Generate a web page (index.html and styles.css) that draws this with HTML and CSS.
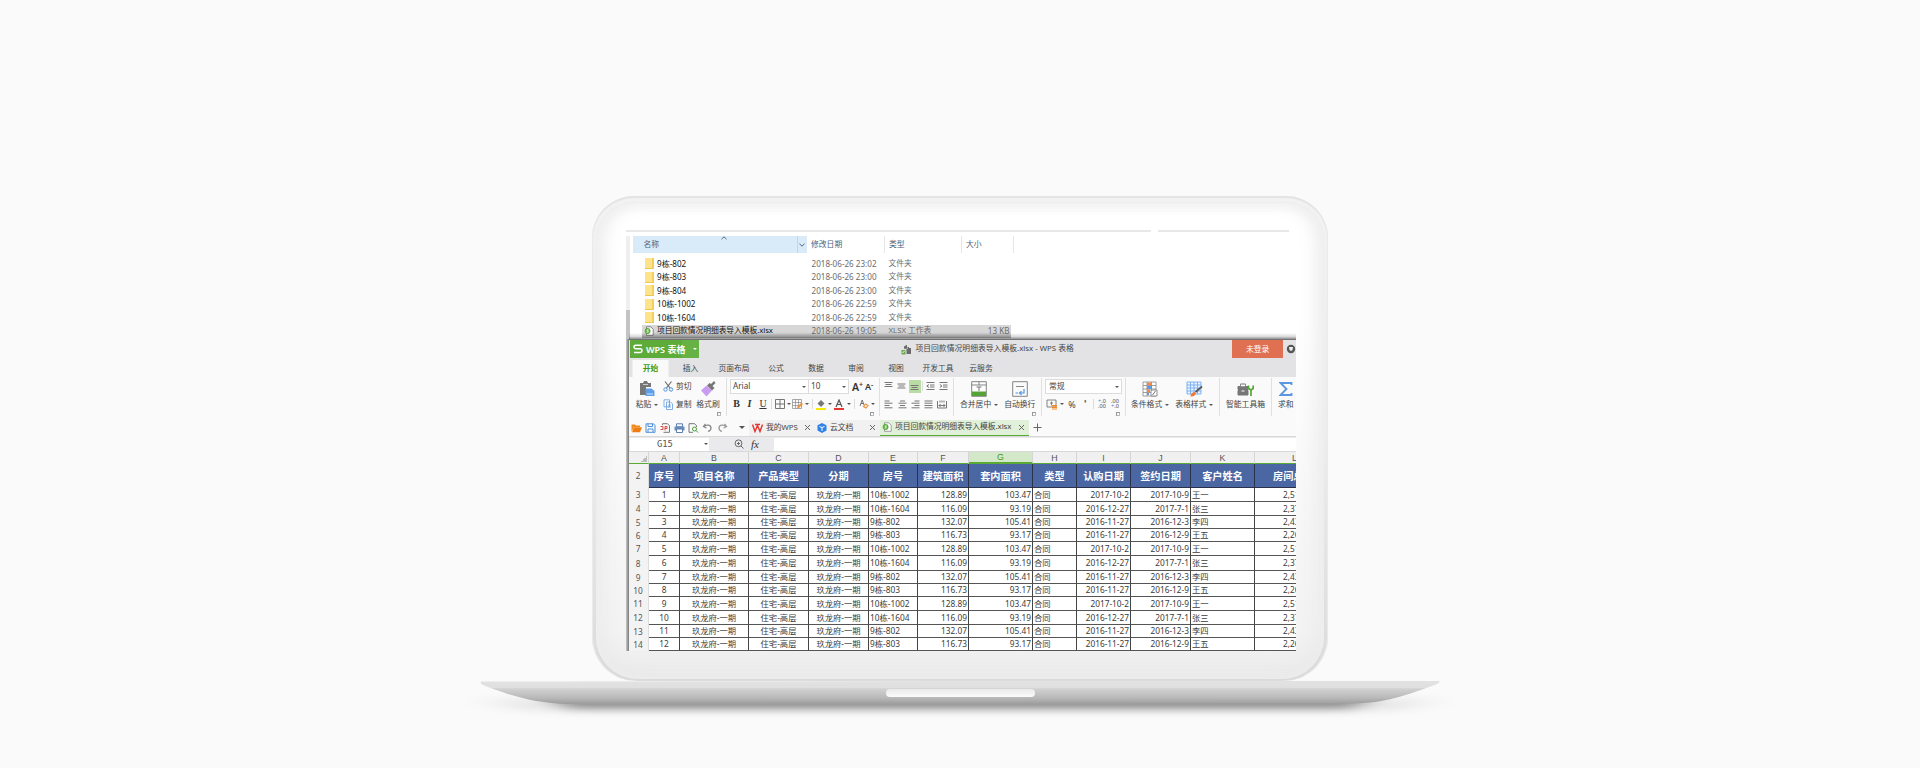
FILE: index.html
```html
<!DOCTYPE html>
<html lang="zh-CN">
<head>
<meta charset="utf-8">
<title>项目回款情况明细表导入模板.xlsx - WPS 表格</title>
<link rel="stylesheet" href="styles.css">
</head>
<body>
<main class="laptop">
<div class="lid"><div class="bezel"><div class="screen">

<section class="explorer">
  <div class="topline"><i></i><i></i></div>
  <div class="fhead"><b class="name">名称<svg class="up" width="6" height="4" viewBox="0 0 6 4"><path d="M.5 3.2 3 .8l2.5 2.4"/></svg></b><b class="drop"><svg width="6" height="4" viewBox="0 0 6 4"><path d="M.5.8 3 3.2 5.5.8"/></svg></b><b class="date">修改日期</b><b class="type">类型</b><b class="size">大小</b></div>
  <div class="files">
    <div class="file"><span class="folder"></span><b>9栋-802</b><span>2018-06-26 23:02</span><span>文件夹</span><span></span></div>
    <div class="file"><span class="folder"></span><b>9栋-803</b><span>2018-06-26 23:00</span><span>文件夹</span><span></span></div>
    <div class="file"><span class="folder"></span><b>9栋-804</b><span>2018-06-26 23:00</span><span>文件夹</span><span></span></div>
    <div class="file"><span class="folder"></span><b>10栋-1002</b><span>2018-06-26 22:59</span><span>文件夹</span><span></span></div>
    <div class="file"><span class="folder"></span><b>10栋-1604</b><span>2018-06-26 22:59</span><span>文件夹</span><span></span></div>
    <div class="file sel"><svg width="10" height="10" viewBox="0 0 10 10"><path d="M2.5.8h4.2l2.5 2.5v6H2.5z" fill="#fff" stroke="#666" stroke-width=".8"/><circle cx="3.6" cy="5" r="2.9" fill="#5cae3c"/><path d="M4.8 3.8H3.2v1.1h1v1.2H2.4" fill="none" stroke="#fff" stroke-width=".7"/></svg><b class="long">项目回款情况明细表导入模板.xlsx</b><span>2018-06-26 19:05</span><span>XLSX 工作表</span><span class="kb">13 KB</span></div>
  </div>
</section>

<section class="work">
<div class="rail"></div>
<div class="wps">
  <header class="title">
    <div class="brand"><svg width="10" height="10" viewBox="0 0 10 10"><path d="M9 1.3H2.8Q1 1.3 1 3t1.8 1.8h4.4Q9 4.800 9 6.600T7.200 8.500H1" fill="none" stroke="#fff" stroke-width="1.5"/></svg><b>WPS 表格</b><i class="caret"></i></div>
    <div class="caption"><svg width="11" height="11" viewBox="0 0 11 11"><path d="M3 2.500 6 .8v4H3zM6.500 3h1.500v1h2v6H5.500V5h1z" fill="#6a6a6a"/><path d="M.5 6h4v4.500h-4z" fill="#6aa84f"/><path d="M1.500 9l2-2" stroke="#fff"/></svg><span>项目回款情况明细表导入模板.xlsx - WPS 表格</span></div>
    <div class="login">未登录</div>
    <svg class="skin" width="10" height="10" viewBox="0 0 10 10"><circle cx="5" cy="5" r="4.200" fill="#555"/><path d="M3 3h4l-.5 3L5 7 3.500 6z" fill="#eee"/></svg>
  </header>
  <nav class="tabs"><b>开始</b><span>插入</span><span class="w4">页面布局</span><span>公式</span><span>数据</span><span>审阅</span><span>视图</span><span class="w4">开发工具</span><span class="w3">云服务</span></nav>

  <div class="ribbon">
    <div class="grp clip">
      <div class="big paste"><svg width="17" height="16" viewBox="0 0 17 16"><path d="M1 2h3l1-2h3l1 2h3v4H7v8H1z" fill="#777"/><path d="M4 3.500h5" stroke="#ccc"/><path d="M6.500 7.500h6l3 2.500v5h-9z" fill="#5f9fe8"/><path d="M8 13h6" stroke="#cfe2f8"/></svg><span>粘贴<i class="caret"></i></span></div>
      <div class="duo">
        <span><svg width="11" height="11" viewBox="0 0 11 11" fill="none"><path d="M2 .5 7 7M8.500.5 3.500 7" stroke="#666" stroke-width="1.100"/><circle cx="2.500" cy="8.500" r="1.700" stroke="#4f93dd"/><circle cx="8" cy="8.500" r="1.700" stroke="#4f93dd"/></svg>剪切</span>
        <span><svg width="11" height="11" viewBox="0 0 11 11" fill="#fff" stroke="#5e9ce2" stroke-width=".8"><path d="M1 .8h5.500v7H1zM3.500 3h4l2 2v5.500h-6zM5 6h3M5 8h3"/></svg>复制</span>
      </div>
      <div class="big brush"><svg width="16" height="16" viewBox="0 0 16 16"><path d="M7 4.500 9.500 2l1.500 1L14 0l1.500 2-3 3 2 2-2.500 2.500z" fill="#777"/><path d="M1 9.500l5.500-5 5.500 5-5.500 6z" fill="#c89cf0"/></svg><span>格式刷</span></div>
      <i class="corner"></i>
    </div>
    <div class="grp font">
      <div class="r1"><span class="box b1">Arial<i class="caret"></i></span><span class="box b2">10<i class="caret"></i></span><span class="aa">A<sup>+</sup></span><span class="aa sm">A<sup>-</sup></span></div>
      <div class="r2">
        <b>B</b><em>I</em><u>U</u><i class="bar"></i>
        <svg width="10" height="10" viewBox="0 0 10 10"><path d="M.5.5h9v9h-9zM5 .5v9M.5 5h9" fill="none" stroke="#666" stroke-width=".9"/></svg><i class="caret"></i>
        <svg width="11" height="10" viewBox="0 0 11 10"><path d="M.5.5h9v9h-9zM.5 3.500h9M3.500.5v9M6.500.5v9M.5 6.500h9" fill="none" stroke="#888" stroke-width=".7"/><path d="m5 9.500.5-2 4-4 1.500 1.500-4 4z" fill="#f0923b"/></svg><i class="caret"></i><i class="bar"></i>
        <svg width="10" height="11" viewBox="0 0 10 11"><path d="M1.500 4.500 5 1l3.500 3.500L5 8z" fill="#777"/><path d="M0 9h10v2H0z" fill="#f7ea00"/></svg><i class="caret"></i>
        <svg width="10" height="11" viewBox="0 0 10 11"><path d="m2 8 3-7 3 7M3 5.500h4" fill="none" stroke="#555" stroke-width="1.200"/><path d="M0 9h10v2H0z" fill="#e23a2e"/></svg><i class="caret"></i><i class="bar"></i>
        <svg width="10" height="10" viewBox="0 0 10 10" fill="none"><path d="m1 7 2.200-6 1.800 5M2 4.500h2.500" stroke="#666" stroke-width=".9"/><path d="m4.500 7.500 2-2.500 2.500 1.500-2 2.500z" stroke="#f0923b" stroke-width="1.200"/></svg><i class="caret"></i>
      </div>
      <i class="corner"></i>
    </div>
    <div class="grp align">
      <div class="a1">
        <svg width="9" height="10" viewBox="0 0 9 10"><path d="M.5 1.500h8M1.500 3.500h6M.5 5.500h8"/></svg>
        <svg width="9" height="10" viewBox="0 0 9 10"><path d="M.5 3h8M1.500 5h6M.5 7h8"/></svg>
        <span class="on"><svg width="9" height="10" viewBox="0 0 9 10"><path d="M.5 4.500h8M1.500 6.500h6M.5 8.500h8"/></svg></span>
        <i class="bar"></i>
        <svg width="9" height="10" viewBox="0 0 9 10"><path d="M.5 1.500h8M4 4h4.500M4 6h4.500M.5 8.500h8M3 3.500.8 5 3 6.500"/></svg>
        <svg width="9" height="10" viewBox="0 0 9 10"><path d="M.5 1.500h8M4 4h4.500M4 6h4.500M.5 8.500h8M.8 3.500 3 5 .8 6.500"/></svg>
      </div>
      <div class="a2">
        <svg width="9" height="9" viewBox="0 0 9 9"><path d="M.5 1h5M.5 3.200h8M.5 5.500h5M.5 7.800h8"/></svg>
        <svg width="9" height="9" viewBox="0 0 9 9"><path d="M2 1h5M.5 3.200h8M2 5.500h5M.5 7.800h8"/></svg>
        <svg width="9" height="9" viewBox="0 0 9 9"><path d="M3.500 1h5M.5 3.200h8M3.500 5.500h5M.5 7.800h8"/></svg>
        <svg width="9" height="9" viewBox="0 0 9 9"><path d="M.5 1h8M.5 3.200h8M.5 5.500h8M.5 7.800h8"/></svg>
        <svg width="10" height="9" viewBox="0 0 10 9"><path d="M.5 1v7h9V1M2 5.500h6M3.500 4 2 5.500 3.500 7M6.500 4 8 5.500 6.500 7M3 .5v2M5 .5v2M7 .5v2"/></svg>
      </div>
    </div>
    <div class="grp merge">
      <div class="big mg"><svg width="16" height="16" viewBox="0 0 16 16"><path d="M.7.7h14.600v14.600H.7zM.7 4h14.600M8 .7V4" fill="#fff" stroke="#777" stroke-width=".9"/><path d="M1 10.500h14V15H1z" fill="#55a236"/><path d="M5.500 6h5M8 6v4" stroke="#777"/></svg><span>合并居中<i class="caret"></i></span></div>
      <div class="big"><svg width="16" height="16" viewBox="0 0 16 16" fill="none"><path d="M.7.7h14.600v14.600H.7z" stroke="#777" stroke-width=".9"/><path d="M4 5.500h8" stroke="#888"/><path d="M12 8v4H8.500M3.500 12H6M9.500 10.300 7.500 12l2 1.700" stroke="#4f93dd" stroke-width="1.200"/></svg><span>自动换行</span></div>
      <i class="corner"></i>
    </div>
    <div class="grp num">
      <div class="r1"><span class="box b3">常规<i class="caret"></i></span></div>
      <div class="n2"><svg width="12" height="11" viewBox="0 0 12 11"><path d="M1 1h9v7H1zM5.500 2.500v4M4 4h3" fill="none" stroke="#777" stroke-width=".9"/><path d="M6 6h5v1.500H6zM6 8h5v1H6zM6 9.500h5v1H6z" fill="#f58a2c"/></svg><i class="caret"></i><span>%</span><b>❜</b><i class="bar"></i><small><q>+</q>.0<br>.00</small><small>.00<br><q>+</q>.0</small></div>
      <i class="corner"></i>
    </div>
    <div class="grp styles">
      <div class="big"><svg width="16" height="16" viewBox="0 0 16 16"><path d="M1 1h13v14H1zM1 4.500h13M1 8h13M1 11.500h13M5 1v14M9.500 1v14" fill="#fff" stroke="#888" stroke-width=".8"/><path d="M5 1.500h4v3H5z" fill="#ee8a4b"/><path d="M5 5h5v3H5zM5 12h2v2H5z" fill="#5a9ae6"/><path d="M5 8.300h3v3H5z" fill="#ee8a4b"/><path d="M9 9h6v6H9z" fill="#fff" stroke="#777" stroke-width=".8"/><path d="m10.500 14 3-4" stroke="#777"/></svg><span>条件格式<i class="caret"></i></span></div>
      <div class="big"><svg width="17" height="16" viewBox="0 0 17 16"><path d="M1 1h14v12H1zM1 4h14M1 7h14M1 10h14M4.500 1v12M8 1v12M11.500 1v12" fill="#e9f3ff" stroke="#75abec" stroke-width=".9"/><path d="M16 5.500 9.500 11" stroke="#555" stroke-width="1.700"/><path d="M4.500 15.500c0-3 2-4.500 4.500-4.500l1 1.500c-1 2.500-3 3-5.500 3z" fill="#ed7a38"/></svg><span>表格样式<i class="caret"></i></span></div>
    </div>
    <div class="grp kit"><div class="big"><svg width="17" height="16" viewBox="0 0 17 16"><path d="M3.500 5V3h5v2M1 5.500h10v3H1zM1 9.500h10V14H1z" fill="#777" stroke="#777"/><path d="M3.800 5.300V3.500h4.400v1.800M4.500 9.500h3v1h-3z" fill="#fff"/><path d="M11.500 4.500v3L14 9v6M16.200 4.500v3L14 9" fill="none" stroke="#51a733" stroke-width="1.700"/></svg><span>智能工具箱</span></div></div>
    <div class="grp sum"><div class="big"><svg width="14" height="16" viewBox="0 0 14 16"><path d="M12.500 4V2H1.500l6 6-6 6h11v-2" fill="none" stroke="#5a97e0" stroke-width="1.800"/></svg><span>求和</span></div></div>
  </div>

  <div class="docs">
    <div class="quick">
      <svg width="11" height="10" viewBox="0 0 11 10"><path d="M.5 9V1.500H4l1 1h4V4H3z" fill="#f28a1c"/><path d="m1 9.300 2-5h8l-2 5z" fill="#ee7d12"/></svg>
      <svg width="11" height="10" viewBox="0 0 11 10" fill="none" stroke="#4b8fd8"><path d="M1 .8h7.500l1.500 1.500v7H1zM3 1v2.500h4.500V1M3 9V6h5v3"/></svg>
      <svg width="11" height="10" viewBox="0 0 11 10" fill="none"><path d="M2.500 2V.7h5l2 2v6.600h-6" stroke="#777"/><path d="M.5 3.500h2.500v3H.5M5 7.500V3.500h2v2H5" stroke="#dc4b3e"/></svg>
      <svg width="11" height="10" viewBox="0 0 11 10"><path d="M2.500.8h6v3h-6z" fill="#fff" stroke="#5d7eb0"/><path d="M.5 3.500h10v4H.5z" fill="#6c8cbd"/><path d="M2.500 6h6v3.500h-6z" fill="#fff" stroke="#5d7eb0"/></svg>
      <svg width="11" height="10" viewBox="0 0 11 10" fill="none"><path d="M8.500 4V2.500L6.500.7H1v8.600h4" stroke="#777"/><circle cx="6.500" cy="6" r="2" stroke="#4a9a36"/><path d="m8 7.500 2 2" stroke="#4a9a36"/></svg>
      <svg width="11" height="10" viewBox="0 0 11 10" fill="none" stroke="#888" stroke-width="1.300"><path d="M3.500 1 1.500 3.500l3 1.500M1.800 3.500C5 1 9 2 9 5c0 2-1.500 3-3 3.500"/></svg>
      <svg width="11" height="10" viewBox="0 0 11 10" fill="none" stroke="#999" stroke-width="1.300"><path d="m7.500 1 2 2.500-3 1.500M9.200 3.500C6 1 2 2 2 5c0 2 1.500 3 3 3.500"/></svg>
      <i class="caret big-c"></i>
    </div>
    <div class="dtab t1"><svg width="11" height="10" viewBox="0 0 11 10" fill="none" stroke="#e2352c" stroke-width="1.400"><path d="M.5 1.500 3 8.500l2.500-6 2.500 6 2.500-7M3 1.500h5"/></svg><span>我的WPS</span><i class="x"></i></div>
    <div class="dtab t2"><svg width="10" height="10" viewBox="0 0 10 10"><path d="M5 0 9.500 2.300v5.200L5 10 .5 7.500V2.300z" fill="#2f82e8"/><path d="m2.500 3.500 2.500 1 2.500-1M5 4.500v3.300" stroke="#fff" fill="none"/></svg><span>云文档</span><i class="x"></i></div>
    <div class="dtab t3"><svg width="10" height="10" viewBox="0 0 10 10"><path d="M2.500.8h4.200l2.500 2.500v6H2.500z" fill="#fff" stroke="#888" stroke-width=".8"/><circle cx="3.600" cy="5" r="2.900" fill="#5cae3c"/><path d="M4.800 3.800H3.200v1.100h1v1.200H2.400" fill="none" stroke="#fff" stroke-width=".7"/></svg><span>项目回款情况明细表导入模板.xlsx</span><i class="x"></i></div>
    <svg class="plus" width="9" height="9" viewBox="0 0 9 9"><path d="M4.500.5v8M.5 4.500h8" stroke="#666"/></svg>
  </div>

  <div class="formula"><div class="nbox">G15<i class="caret"></i></div><svg width="10" height="10" viewBox="0 0 10 10" fill="none" stroke="#666"><circle cx="4.500" cy="4.300" r="3.400"/><path d="m7 7 2.500 2.500M3 4.500h3M4.500 3v3"/></svg><em>fx</em><div class="finput"></div></div>

  <div class="sheet">
    <div class="row cols"><b class="tri"></b><b>A</b><b>B</b><b>C</b><b>D</b><b>E</b><b>F</b><b class="act">G</b><b>H</b><b>I</b><b>J</b><b>K</b><b>L</b></div>
    <div class="row head"><i>2</i><b>序号</b><b>项目名称</b><b>产品类型</b><b>分期</b><b>房号</b><b>建筑面积</b><b>套内面积</b><b>类型</b><b>认购日期</b><b>签约日期</b><b>客户姓名</b><b>房间总价</b></div>
    <div class="row"><i>3</i><b>1</b><b>玖龙府-一期</b><b>住宅-高层</b><b>玖龙府-一期</b><b>10栋-1002</b><b>128.89</b><b>103.47</b><b>合同</b><b>2017-10-2</b><b>2017-10-9</b><b>王一</b><b>2,51</b></div>
    <div class="row"><i>4</i><b>2</b><b>玖龙府-一期</b><b>住宅-高层</b><b>玖龙府-一期</b><b>10栋-1604</b><b>116.09</b><b>93.19</b><b>合同</b><b>2016-12-27</b><b>2017-7-1</b><b>张三</b><b>2,37</b></div>
    <div class="row s"><i>5</i><b>3</b><b>玖龙府-一期</b><b>住宅-高层</b><b>玖龙府-一期</b><b>9栋-802</b><b>132.07</b><b>105.41</b><b>合同</b><b>2016-11-27</b><b>2016-12-3</b><b>李四</b><b>2,43</b></div>
    <div class="row s"><i>6</i><b>4</b><b>玖龙府-一期</b><b>住宅-高层</b><b>玖龙府-一期</b><b>9栋-803</b><b>116.73</b><b>93.17</b><b>合同</b><b>2016-11-27</b><b>2016-12-9</b><b>王五</b><b>2,26</b></div>
    <div class="row"><i>7</i><b>5</b><b>玖龙府-一期</b><b>住宅-高层</b><b>玖龙府-一期</b><b>10栋-1002</b><b>128.89</b><b>103.47</b><b>合同</b><b>2017-10-2</b><b>2017-10-9</b><b>王一</b><b>2,51</b></div>
    <div class="row l"><i>8</i><b>6</b><b>玖龙府-一期</b><b>住宅-高层</b><b>玖龙府-一期</b><b>10栋-1604</b><b>116.09</b><b>93.19</b><b>合同</b><b>2016-12-27</b><b>2017-7-1</b><b>张三</b><b>2,37</b></div>
    <div class="row s"><i>9</i><b>7</b><b>玖龙府-一期</b><b>住宅-高层</b><b>玖龙府-一期</b><b>9栋-802</b><b>132.07</b><b>105.41</b><b>合同</b><b>2016-11-27</b><b>2016-12-3</b><b>李四</b><b>2,43</b></div>
    <div class="row s"><i>10</i><b>8</b><b>玖龙府-一期</b><b>住宅-高层</b><b>玖龙府-一期</b><b>9栋-803</b><b>116.73</b><b>93.17</b><b>合同</b><b>2016-11-27</b><b>2016-12-9</b><b>王五</b><b>2,26</b></div>
    <div class="row"><i>11</i><b>9</b><b>玖龙府-一期</b><b>住宅-高层</b><b>玖龙府-一期</b><b>10栋-1002</b><b>128.89</b><b>103.47</b><b>合同</b><b>2017-10-2</b><b>2017-10-9</b><b>王一</b><b>2,51</b></div>
    <div class="row"><i>12</i><b>10</b><b>玖龙府-一期</b><b>住宅-高层</b><b>玖龙府-一期</b><b>10栋-1604</b><b>116.09</b><b>93.19</b><b>合同</b><b>2016-12-27</b><b>2017-7-1</b><b>张三</b><b>2,37</b></div>
    <div class="row s"><i>13</i><b>11</b><b>玖龙府-一期</b><b>住宅-高层</b><b>玖龙府-一期</b><b>9栋-802</b><b>132.07</b><b>105.41</b><b>合同</b><b>2016-11-27</b><b>2016-12-3</b><b>李四</b><b>2,43</b></div>
    <div class="row s"><i>14</i><b>12</b><b>玖龙府-一期</b><b>住宅-高层</b><b>玖龙府-一期</b><b>9栋-803</b><b>116.73</b><b>93.17</b><b>合同</b><b>2016-11-27</b><b>2016-12-9</b><b>王五</b><b>2,26</b></div>
  </div>
</div>
</section>
</div></div></div>

<svg class="base" width="1080" height="60" viewBox="420 681 1080 60">
  <defs>
    <linearGradient id="metal" x1="0" y1="680" x2="0" y2="704" gradientUnits="userSpaceOnUse"><stop offset="0" stop-color="#e3e3e3"/><stop offset=".33" stop-color="#dfdfdf"/><stop offset=".36" stop-color="#d2d2d2"/><stop offset=".75" stop-color="#b8b8b8"/><stop offset="1" stop-color="#9d9d9d"/></linearGradient>
    <linearGradient id="notch" x1="0" y1="0" x2="0" y2="1"><stop offset="0" stop-color="#e9e9e9"/><stop offset="1" stop-color="#fbfbfb"/></linearGradient>
    <filter id="soft" x="-10%" y="-200%" width="120%" height="500%"><feGaussianBlur stdDeviation="12 4"/></filter>
    <filter id="wide" x="-10%" y="-200%" width="120%" height="500%"><feGaussianBlur stdDeviation="20 5"/></filter>
  </defs>
  <path d="M480 700H1440L1390 710H530z" fill="#000" opacity=".1" filter="url(#wide)"/>
  <path d="M545 696H1375L1350 708H570z" fill="#000" opacity=".42" filter="url(#soft)"/>
  <path d="M481 681.500 960 681 1439 680.500q1.500 2-2 3.500C1405 696 1385 703 1352 703.500L960 704H565C530 703 500 692 482 684.500q-2-1.500-1-3z" fill="url(#metal)"/>
  <rect x="886" y="689" width="149" height="8" rx="4" fill="url(#notch)"/>
</svg>
</main>
</body>
</html>
```
FILE: styles.css
```css
* { box-sizing: border-box; }
body {
  margin: 0; height: 768px; overflow: hidden; background: #fafafa;
  font-family: "Noto Sans", "Noto Sans CJK SC", sans-serif; font-size: 7.8px; line-height: 1; color: #555;
}
b, i, em { font-weight: normal; font-style: normal; }
svg { flex: none; display: block; }
.laptop { display: flex; flex-direction: column; align-items: center; padding-top: 196px; }

/* lid */
.lid {
  width: 736px; height: 485px; padding: 6px 4px 2px; border-radius: 42px 42px 44px 44px;
  background: linear-gradient(#f2f2f2, #ededed 50%, #dadada);
  box-shadow: inset 0 2px 1px #e3e3e3, inset 1px 0 1px #ececec, inset -1px 0 1px #ececec;
}
.bezel {
  height: 477px; padding: 28px 30px; border-radius: 38px 38px 42px 42px;
  background: linear-gradient(#fff 0, #fff 25%, #f3f3f3 90%, #ebebeb);
  box-shadow: inset 0 2px 12px #f2f2f2, inset 0 1px 1px #e6e6e6, inset 10px 0 22px -6px #e6e6e6, inset -10px 0 22px -6px #e6e6e6;
}
.screen { width: 670px; height: 421px; overflow: hidden; background: #fff; }

/* file explorer */
.explorer { height: 109px; overflow: hidden; background: linear-gradient(#efefef, #efefef) no-repeat 0 6px / 4px 74px, linear-gradient(#c4c4c4, #c4c4c4) no-repeat 0 80px / 4px 29px; }
.topline { display: flex; gap: 7px; height: 6px; }
.topline i { width: 525px; height: 2px; background: #e8e8e8; }
.topline i + i { width: 131px; }
.fhead { display: flex; height: 17px; margin-left: 7px; color: #4e6079; }
.fhead b { display: flex; align-items: center; height: 17px; border-right: 1px solid #e6e6e6; padding-left: 4px; }
.fhead .name { width: 165px; padding-left: 10.500px; background: #d9ebf9; border-color: #bcd8ee; position: relative; }
.fhead .drop { width: 9px; padding-left: 1px; background: #d9ebf9; border: 0; }
.fhead path { fill: none; stroke: #55677d; stroke-width: 1; }
.up { position: absolute; left: 88px; top: 0; }
.fhead .date { width: 78px; }
.fhead .type { width: 77px; }
.fhead .size { width: 52px; }
.files { padding: 4px 0 0 16px; }
.file { display: grid; grid-template-columns: 12px 154.500px 77px 81px 42px; width: 369px; height: 13.5px; padding-left: 3px; align-items: center; font-size: 8.1px; color: #6c6c6c; white-space: nowrap; }
.file b { color: #111; }
.file .long { font-size: 7.8px; letter-spacing: -.09px; }
.file span:nth-child(4) { font-size: 7.8px; }
.folder { width: 9px; height: 11px; background: linear-gradient(90deg, #fde48c 75%, #f5cf5b 75%); border-bottom: 1px solid #efc64e; }
.sel { background: linear-gradient(#d7d7d7 55%, #aaa); }
.sel svg { margin-left: -1px; }
.kb { text-align: right; padding-right: 2px; }

/* WPS window */
.work { display: flex; position: relative; }
.work::before { content: ""; position: absolute; left: 3px; right: 0; top: -6px; height: 7px; background: linear-gradient(transparent, rgba(0,0,0,.15) 50%, rgba(0,0,0,.55)); }
.rail { width: 3px; flex: none; background: linear-gradient(90deg, #c8c8c8, #777); }
.wps { width: 667px; height: 312px; flex: none; overflow: hidden; background: #fafafa; white-space: nowrap; }
.caret { display: inline-block; flex: none; width: 0; height: 0; border: 2px solid transparent; border-top: 2.500px solid #555; border-bottom: 0; }

.title { display: flex; align-items: center; height: 20px; background: #e3e3e5; padding: 1px 0 1px 1px; }
.brand { display: flex; align-items: center; width: 70px; height: 18px; padding: 0 2px 0 3px; gap: 3px; background: linear-gradient(90deg, #5dab38 52px, #67b244 52px); color: #fff; }
.brand b { flex: 1; font-size: 9px; font-weight: 600; }
.brand .caret { border-top-color: #fff; }
.caption { display: flex; align-items: center; gap: 3px; width: 332px; margin-left: 202px; color: #444; }
.caption span { letter-spacing: .02px; }
.login { width: 51px; height: 18px; line-height: 18px; text-align: center; background: #e07052; color: #fff; margin-left: 0; }
.title .caption { width: 334px; }
.skin { margin-left: 3px; }

.tabs { display: flex; height: 18px; align-items: center; background: #e3e3e5; padding-left: 3px; color: #444; }
.tabs b { width: 37px; height: 17px; line-height: 17px; margin-top: 1px; text-align: center; background: #fafafa; color: #3e9a18; font-weight: 600; border: 1px solid #eee; border-width: 0 1px; }
.tabs span { width: 40px; text-align: center; padding-top: 1px; }
.tabs span:nth-child(2) { width: 43px; }
.tabs .w4 { width: 44px; }
.tabs .w3 { width: 42px; }
.tabs span:nth-child(3) { width: 44px; }

/* ribbon */
.ribbon { display: flex; height: 41px; padding-top: 1px; color: #444; }
.grp { position: relative; display: flex; height: 38px; flex: none; border-right: 1px solid #e0e0e0; }
.big { display: flex; flex-direction: column; align-items: center; gap: 4px; padding-top: 3px; }
.big span { display: flex; align-items: center; gap: 3px; }
.corner { position: absolute; right: 5px; bottom: 0; width: 4px; height: 4px; border: 1px solid #999; border-width: 1px 0 0 1px; box-shadow: inset -1px -1px #bbb; }
.clip { width: 98px; padding-left: 4px; }
.paste { width: 28px; }
.duo { display: flex; flex-direction: column; gap: 7px; padding: 3px 0 0 2px; width: 32px; }
.duo span { display: flex; gap: 2px; align-items: center; height: 11px; }
.brush { width: 30px; }
.font { width: 153px; padding-left: 3px; flex-direction: column; }
.r1 { display: flex; align-items: center; height: 15px; margin-top: 1px; }
.box { display: flex; align-items: center; justify-content: space-between; height: 15px; padding: 0 2px 0 2px; border: 1px solid #dcdcdc; background: #fff; font-size: 8.200px; }
.b1 { width: 79px; }
.b2 { width: 40px; border-left: 0; }
.b3 { width: 77px; padding-left: 3px; font-size: 7.800px; }
.aa { width: 13px; margin-left: 3px; font-size: 10.500px; color: #333; line-height: 10px; font-weight: 600; display: flex; }
.aa sup { font-size: 7px; line-height: 5px; }
.aa.sm { font-size: 9px; margin-left: 0; }
.r2 { display: grid; grid-template-columns: 13px 13px 14px 3px 13px 5px 13px 6px 5px 12px 6px 12px 7px 5px 13px 6px; align-items: center; justify-items: center; height: 12px; margin-top: 4px; }
.r2 b, .r2 em, .r2 u { font: bold 10px/10px "Liberation Serif", serif; color: #333; }
.r2 em { font-style: italic; }
.r2 u { font-weight: normal; }
.bar { width: 1px; height: 10px; background: #ddd; }
.align { width: 74px; flex-direction: column; padding-left: 2px; }
.align path { fill: none; stroke: #777; stroke-width: 1; }
.a1 { display: grid; grid-template-columns: 13px 13px 13px 3px 13px 13px; align-items: center; justify-items: center; height: 14px; margin-top: 1px; }
.a1 .on { display: grid; place-items: center; width: 12px; height: 13px; background: #b9dca4; }
.a2 { display: grid; grid-template-columns: 13px 14px 13px 13px 14px; align-items: center; justify-items: center; margin-top: 7px; }
.merge { width: 88px; padding-left: 6px; gap: 6px; }
.num { width: 84px; padding-left: 3px; flex-direction: column; }
.n2 { display: grid; grid-template-columns: 14px 6px 14px 12px 5px 12px 14px; align-items: center; justify-items: center; height: 12px; margin-top: 4px; }
.n2 span { font-size: 9px; }
.n2 small { font-size: 5.500px; line-height: 5px; text-align: right; }
.n2 q { quotes: none; color: #3f86dc; }
.styles { width: 94px; padding-left: 5px; gap: 6px; }
.kit { width: 52px; padding-left: 6px; }
.sum { padding-left: 6px; border: 0; }

/* document tabs */
.docs { display: flex; height: 19px; align-items: center; border-bottom: 1px solid #d8d8d8; color: #444; padding-top: 1px; }
.quick { display: flex; align-items: center; width: 120px; padding-left: 2px; gap: 3.300px; }
.big-c { margin-left: 8px; border-width: 3px 3px 0; }
.dtab { display: flex; align-items: center; height: 16px; gap: 3px; background: #f1f1f1; padding: 0 5px 0 2px; }
.dtab .x { margin-left: auto; width: 5px; height: 5px; background: linear-gradient(45deg, transparent 43%, #666 43% 57%, transparent 57%), linear-gradient(-45deg, transparent 43%, #666 43% 57%, transparent 57%); }
.t1 { width: 66px; padding-left: 3px; }
.t2 { width: 65px; }
.t3 { width: 149px; background: #e1f0d8; border-bottom: 1px solid #59ab36; letter-spacing: -.06px; }
.plus { margin-left: 4px; }

.formula { display: flex; align-items: center; height: 15px; background: #eaeaec; border-bottom: 1px solid #d8d8d8; padding-left: 1px; }
.nbox { display: flex; align-items: center; width: 79px; height: 13px; padding: 0 1px 0 27px; justify-content: space-between; background: #fff; font: 8.800px "DejaVu Sans Mono", monospace; }
.formula svg { margin: 0 6px 0 25px; }
.formula em { width: 24px; padding-left: 1px; font: italic 11px "Liberation Serif", serif; color: #333; }
.finput { flex: 1; height: 13px; background: #fff; }

/* worksheet */
.sheet { width: 706px; background: #fff; }
.row { display: grid; grid-template-columns: 20px 31px 69px 60px 60px 49px 51px 64px 44px 54px 60px 64px 80px; height: 14px; font-size: 8.300px; color: #3c3c3c; }
.row.s { height: 13px; }
.row.l { height: 15px; }
.row > * { display: flex; align-items: center; justify-content: center; padding-top: 1px; border-right: 1px solid #444; border-bottom: 1px solid #555; }
.row > i { background: #f3f3f3; border: 0; border-right: 1px solid #ddd; padding-right: 1px; color: #555; }
.row > :nth-child(6), .row > :nth-child(9), .row > :nth-child(12) { justify-content: flex-start; padding-left: 1px; }
.row > :nth-child(7), .row > :nth-child(8), .row > :nth-child(10), .row > :nth-child(11) { justify-content: flex-end; padding-right: 1px; }
.row > :nth-child(13) { justify-content: flex-start; padding-left: 28px; }
.row.cols { height: 12px; font-family: "Liberation Sans", sans-serif; font-size: 8.800px; }
.row.cols > * { justify-content: center; padding: 1px 0 0; background: #f0f0f0; border-right: 1px solid #d5d5d5; border-bottom: 1px solid #59ab36; color: #555; }
.row.cols > .act { background: #d3e8c8; color: #3e9a18; border-bottom-width: 2px; }
.row.cols > .tri { background: linear-gradient(135deg, transparent 50%, #bbb 50%) no-repeat 12px 4px / 6px 6px, #f0f0f0; }
.row.head { height: 24px; font-size: 10.200px; }
.row.head > b { justify-content: center; padding: 1px 0 0; font-weight: 700; background: #4a67a3; color: #fff; border-color: #29324a; }
.row.head > i { font-size: 8.200px; }
.row.head > :nth-child(13) { justify-content: flex-start; padding-left: 18px; }
```
